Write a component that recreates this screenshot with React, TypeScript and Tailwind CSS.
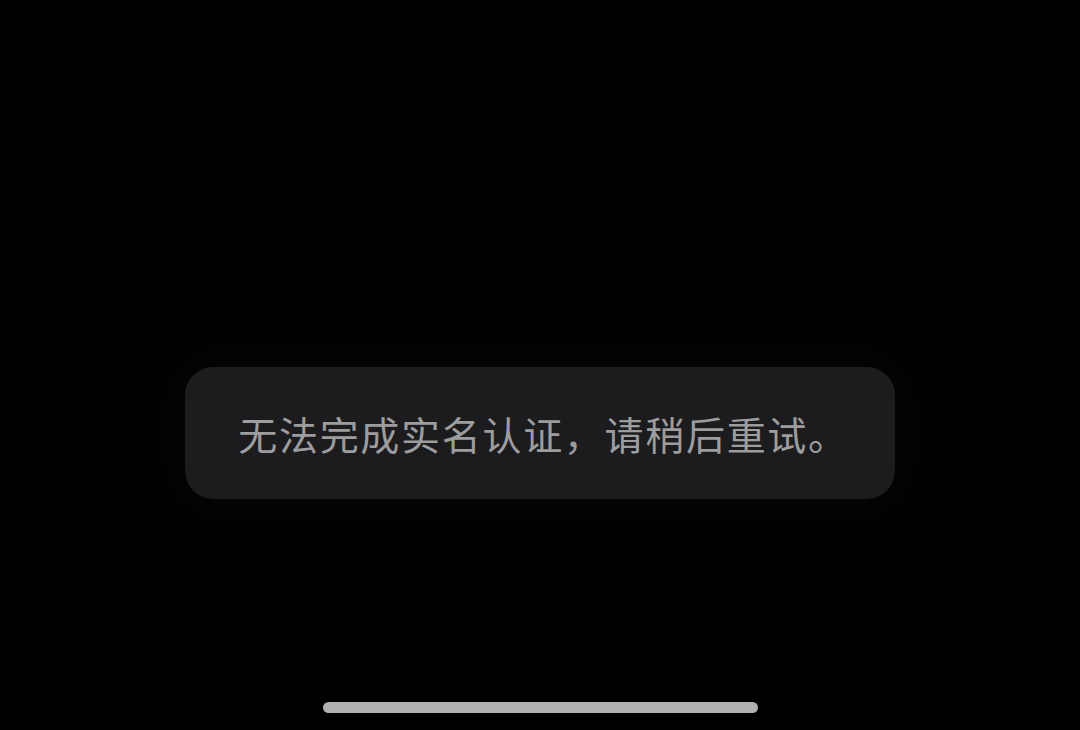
import React from "react";

export default function App() {
  return (
    <div
      className="w-[1080px] h-[730px] bg-black flex flex-col items-center overflow-hidden"
      style={{ fontFamily: '"PingFang SC", "Noto Sans CJK SC", "Noto Sans", sans-serif' }}
    >
      <div className="mt-[367px] w-[710px] h-[132px] rounded-[28px] bg-[#1c1c1e] flex items-center justify-center pl-[7px] shadow-[0_0_50px_10px_rgba(12,12,12,0.6)]">
        <span className="text-[39px] leading-none text-[#9d9d9f] tracking-[1.7px]">
          无法完成实名认证，请稍后重试。
        </span>
      </div>
      <div className="mt-auto mb-[17px] w-[435px] h-[11px] rounded-full bg-[#b0b0b0]" />
    </div>
  );
}
